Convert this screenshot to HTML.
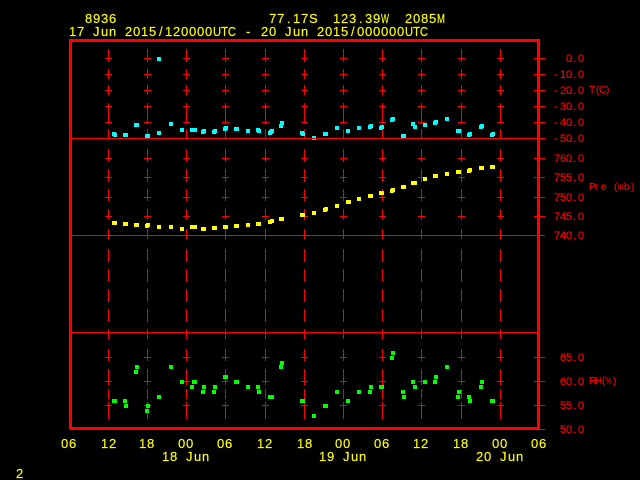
<!DOCTYPE html>
<html>
<head>
<meta charset="utf-8">
<title>8936</title>
<style>
html,body{margin:0;padding:0;background:#000;width:640px;height:480px;overflow:hidden}
svg{display:block}
text{font-family:"Liberation Sans",sans-serif}
.y{fill:#ff0;stroke:#ff0;stroke-width:.15px;font-size:13px}
.r{fill:#f00;stroke:#f00;stroke-width:.2px;font-size:11px}
.u{fill:#f00;stroke:#f00;stroke-width:.15px;font-size:10px}
</style>
</head>
<body>
<svg width="640" height="480" viewBox="0 0 640 480" xmlns="http://www.w3.org/2000/svg">
<defs>
<path id="c" fill="none" stroke="#f00" stroke-width="1" shape-rendering="crispEdges" d="M.5 49V62M.5 69V79M.5 85V95M.5 103V124M.5 129V138M.5 149V162M.5 169V182M.5 189V201M.5 209V220M.5 229V239M.5 249V262M.5 269V282M.5 289V302M.5 309V322M.5 329V339M.5 349V361M.5 369V385M.5 389V399M.5 402V419M-3 58.5H4M-3 74.5H4M-3 90.5H4M-3 106.5H4M-3 122.5H4M-3 158.5H4M-3 177.5H4M-3 197.5H4M-3 216.5H4M-3 357.5H4M-3 381.5H4M-3 405.5H4"/>
</defs>
<rect width="640" height="480" fill="#000"/>
<use href="#c" x="108"/><use href="#c" x="147"/><use href="#c" x="186"/><use href="#c" x="225"/><use href="#c" x="265"/><use href="#c" x="304"/><use href="#c" x="343"/><use href="#c" x="382"/><use href="#c" x="421"/><use href="#c" x="461"/><use href="#c" x="500"/>

<!-- temperature -->
<path fill="#0ff" shape-rendering="crispEdges" d="M157 57h4v4h-4zM112 132h4v4h-4zM113 133h4v4h-4zM123 133h5v4h-5zM134 123h5v4h-5zM145 134h5v4h-5zM157 131h4v4h-4zM169 122h4v4h-4zM180 128h4v4h-4zM190 128h7v4h-7zM201 130h4v4h-4zM202 129h4v4h-4zM212 130h4v4h-4zM213 129h4v4h-4zM223 127h4v4h-4zM224 126h4v4h-4zM234 127h5v4h-5zM246 129h4v4h-4zM256 128h4v4h-4zM257 129h4v4h-4zM268 131h4v4h-4zM269 130h4v4h-4zM270 129h4v4h-4zM279 124h4v4h-4zM280 121h4v4h-4zM300 131h4v4h-4zM301 132h4v4h-4zM312 136h4v4h-4zM323 132h5v4h-5zM335 126h4v4h-4zM346 129h4v4h-4zM357 126h4v4h-4zM368 125h4v4h-4zM369 124h4v4h-4zM379 126h4v4h-4zM380 125h4v4h-4zM390 118h4v4h-4zM391 117h4v4h-4zM401 134h5v4h-5zM411 122h4v4h-4zM413 125h4v4h-4zM423 123h4v4h-4zM433 121h4v4h-4zM434 120h4v4h-4zM445 117h4v4h-4zM456 129h5v4h-5zM467 133h4v4h-4zM468 132h4v4h-4zM479 125h4v4h-4zM480 124h4v4h-4zM490 133h4v4h-4zM491 132h4v4h-4z"/>
<!-- pressure -->
<path fill="#ff0" shape-rendering="crispEdges" d="M112 221h5v4h-5zM123 222h5v4h-5zM134 223h5v4h-5zM145 224h4v4h-4zM146 223h4v4h-4zM157 225h4v4h-4zM169 225h4v4h-4zM180 227h4v4h-4zM190 225h7v4h-7zM201 227h5v4h-5zM212 226h5v4h-5zM223 225h5v4h-5zM234 224h5v4h-5zM246 223h4v4h-4zM256 222h5v4h-5zM268 220h4v4h-4zM270 219h4v4h-4zM279 217h5v4h-5zM300 213h5v4h-5zM312 211h4v4h-4zM323 208h4v4h-4zM324 207h4v4h-4zM335 204h4v4h-4zM346 200h5v4h-5zM357 197h4v4h-4zM368 194h5v4h-5zM379 191h5v4h-5zM390 189h4v4h-4zM391 188h4v4h-4zM401 185h5v4h-5zM411 181h6v4h-6zM423 177h4v4h-4zM433 174h5v4h-5zM445 172h4v4h-4zM456 170h5v4h-5zM467 169h4v4h-4zM468 168h4v4h-4zM479 166h5v4h-5zM490 165h5v4h-5z"/>
<!-- humidity -->
<path fill="#0f0" shape-rendering="crispEdges" d="M112 399h5v4h-5zM123 399h4v4h-4zM124 404h4v4h-4zM135 365h4v4h-4zM134 370h4v4h-4zM146 404h4v4h-4zM145 409h4v4h-4zM157 395h4v4h-4zM169 365h4v4h-4zM180 380h4v4h-4zM190 385h4v4h-4zM192 380h5v4h-5zM202 385h4v4h-4zM201 390h4v4h-4zM213 385h4v4h-4zM212 390h4v4h-4zM223 375h5v4h-5zM234 380h5v4h-5zM246 385h4v4h-4zM256 385h4v4h-4zM257 390h4v4h-4zM268 395h6v4h-6zM280 361h4v4h-4zM279 365h4v4h-4zM300 399h5v4h-5zM312 414h4v4h-4zM323 404h5v4h-5zM335 390h4v4h-4zM346 399h4v4h-4zM357 390h4v4h-4zM368 390h4v4h-4zM369 385h4v4h-4zM379 385h5v4h-5zM391 351h4v4h-4zM390 356h4v4h-4zM401 390h4v4h-4zM402 395h4v4h-4zM411 380h4v4h-4zM413 385h4v4h-4zM423 380h4v4h-4zM433 380h4v4h-4zM434 375h4v4h-4zM445 365h4v4h-4zM457 390h4v4h-4zM456 395h4v4h-4zM467 395h4v4h-4zM468 399h4v4h-4zM479 385h4v4h-4zM480 380h4v4h-4zM490 399h5v4h-5z"/>

<!-- panel lines and axis ticks -->
<path fill="none" stroke="#f00" stroke-width="1" shape-rendering="crispEdges" d="M72 138.5H545M72 235.5H545M72 332.5H537M534 58.5H545M534 74.5H545M534 90.5H545M534 106.5H545M534 122.5H545M534 158.5H545M534 177.5H545M534 197.5H545M534 216.5H545M534 357.5H545M534 381.5H545M534 405.5H545M540 429.5H545"/>
<rect x="70.5" y="40.5" width="468" height="388" fill="none" stroke="#f00" stroke-width="3" shape-rendering="crispEdges"/>

<!-- header -->
<text class="y" y="23" x="85 93 101 109">8936</text>
<text class="y" y="23" x="269 277 287 293 301 309">77.17S</text>
<text class="y" y="23" x="333 341 349 359 365 373">123.39</text>
<text class="y" y="23" x="381" textLength="8" lengthAdjust="spacingAndGlyphs">W</text>
<text class="y" y="23" x="405 413 421 429">2085</text>
<text class="y" y="23" x="437" textLength="8" lengthAdjust="spacingAndGlyphs">M</text>
<text class="y" y="36" x="69 77 93 101 109 125 133 141 149 159 165 173 181 189 197 205">17Jun2015/120000</text>
<text class="y" y="36" x="213" textLength="23" lengthAdjust="spacingAndGlyphs">UTC</text>
<text class="y" y="36" x="246">-</text>
<text class="y" y="36" x="261 269 285 293 301 317 325 333 341 351 357 365 373 381 389 397">20Jun2015/000000</text>
<text class="y" y="36" x="405" textLength="23" lengthAdjust="spacingAndGlyphs">UTC</text>

<!-- temperature axis -->
<text class="r" y="62" x="566 573 578">0.0</text>
<text class="r" y="78" x="554 560 566 573 578">-10.0</text>
<text class="r" y="94" x="554 560 566 573 578">-20.0</text>
<text class="r" y="110" x="554 560 566 573 578">-30.0</text>
<text class="r" y="126" x="554 560 566 573 578">-40.0</text>
<text class="r" y="142" x="554 560 566 573 578">-50.0</text>
<text class="u" y="93" x="589 596 599">T(C</text>
<text class="u" y="93" x="606">)</text>

<!-- pressure axis -->
<text class="r" y="162" x="554 560 566 573 578">760.0</text>
<text class="r" y="181" x="554 560 566 573 578">755.0</text>
<text class="r" y="201" x="554 560 566 573 578">750.0</text>
<text class="r" y="220" x="554 560 566 573 578">745.0</text>
<text class="r" y="239" x="554 560 566 573 578">740.0</text>
<text class="u" y="190" x="589 595 601">Pre</text>
<text class="u" y="190" x="614">(</text>
<text class="u" y="190" x="618" textLength="5.5" lengthAdjust="spacingAndGlyphs">m</text>
<text class="u" y="190" x="624 631">b)</text>

<!-- humidity axis -->
<text class="r" y="361" x="560 566 573 578">65.0</text>
<text class="r" y="385" x="560 566 573 578">60.0</text>
<text class="r" y="409" x="560 566 573 578">55.0</text>
<text class="r" y="433" x="560 566 573 578">50.0</text>
<text class="u" y="384" x="589 595 602">RH(</text>
<text class="u" y="384" x="606" textLength="5.5" lengthAdjust="spacingAndGlyphs">%</text>
<text class="u" y="384" x="613">)</text>

<!-- time axis -->
<text class="y" y="448" x="61 69">06</text>
<text class="y" y="448" x="101 109">12</text>
<text class="y" y="448" x="139 147">18</text>
<text class="y" y="448" x="178 186">00</text>
<text class="y" y="448" x="217 225">06</text>
<text class="y" y="448" x="257 265">12</text>
<text class="y" y="448" x="297 305">18</text>
<text class="y" y="448" x="335 343">00</text>
<text class="y" y="448" x="374 382">06</text>
<text class="y" y="448" x="413 421">12</text>
<text class="y" y="448" x="453 461">18</text>
<text class="y" y="448" x="492 500">00</text>
<text class="y" y="448" x="531 539">06</text>
<text class="y" y="461" x="162 170 186 194 202">18Jun</text>
<text class="y" y="461" x="319 327 343 351 359">19Jun</text>
<text class="y" y="461" x="476 484 500 508 516">20Jun</text>
<text class="y" y="478" x="16">2</text>
</svg>
</body>
</html>
